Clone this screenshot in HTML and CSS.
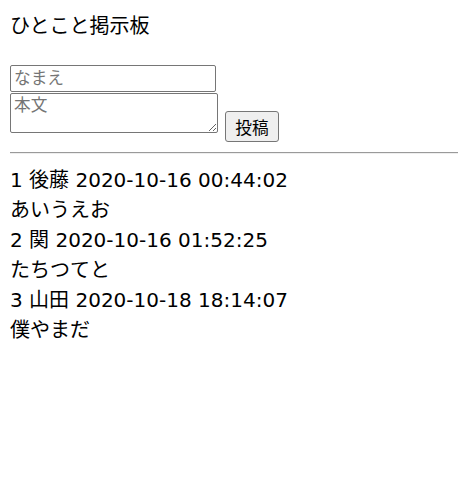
FILE: index.html
```html
<!DOCTYPE html>
<html lang="ja">
<head>
<meta charset="utf-8">
<title>ひとこと掲示板</title>
<link rel="stylesheet" href="styles.css">
</head>
<body>
<h1 class="title">ひとこと掲示板</h1>
<form class="post-form">
  <input class="name-input" type="text" placeholder="なまえ">
  <div class="body-row">
    <textarea class="body-input" placeholder="本文"></textarea>
    <button class="submit" type="button">投稿</button>
  </div>
</form>
<hr class="divider">
<div class="posts">
  <div class="post-head">1 後藤 2020-10-16 00:44:02</div>
  <div class="post-body">あいうえお</div>
  <div class="post-head">2 関 2020-10-16 01:52:25</div>
  <div class="post-body">たちつてと</div>
  <div class="post-head">3 山田 2020-10-18 18:14:07</div>
  <div class="post-body">僕やまだ</div>
</div>
</body>
</html>
```

FILE: styles.css
```css
html, body {
  margin: 0;
  padding: 0;
  background: #fff;
}
body {
  padding: 11px 0 0 10px;
  font-family: "DejaVu Sans", "Noto Sans CJK JP", sans-serif;
  font-size: 20px;
  line-height: 30px;
  color: #000;
}
.title {
  margin: 0;
  font-size: 20px;
  font-weight: normal;
  line-height: 30px;
}
.post-form {
  margin-top: 24px;
  display: flex;
  flex-direction: column;
  align-items: flex-start;
}
.name-input {
  box-sizing: border-box;
  width: 206px;
  height: 27px;
  margin: 0;
  padding: 0 3px;
  border: 1px solid #767676;
  border-radius: 2px;
  font-family: "DejaVu Sans", "Noto Sans CJK JP", sans-serif;
  font-size: 16.67px;
}
.name-input::placeholder,
.body-input::placeholder {
  color: #757575;
}
.body-row {
  margin-top: 1px;
  display: flex;
  align-items: flex-end;
  gap: 7px;
}
.body-input {
  box-sizing: border-box;
  width: 208px;
  height: 40px;
  margin: 0;
  padding: 2px 3px 0 3px;
  border: 1px solid #767676;
  border-radius: 2px;
  font-family: "DejaVu Sans", "Noto Sans CJK JP", sans-serif;
  font-size: 16.67px;
  line-height: 20px;
  resize: both;
  display: block;
}
.submit {
  box-sizing: border-box;
  width: 54px;
  height: 31px;
  margin: 0 0 -9px 0;
  padding: 0;
  border: 1px solid #767676;
  border-radius: 3px;
  background: #efefef;
  font-family: "DejaVu Sans", "Noto Sans CJK JP", sans-serif;
  font-size: 16.67px;
  color: #000;
}
.divider {
  margin: 19px 0 0 0;
  height: 0;
  border: 0;
  border-top: 1px solid #9a9a9a;
  border-bottom: 1px solid #eeeeee;
}
.posts {
  margin-top: 11px;
}
.post-head,
.post-body {
  height: 30px;
  white-space: nowrap;
}
```
